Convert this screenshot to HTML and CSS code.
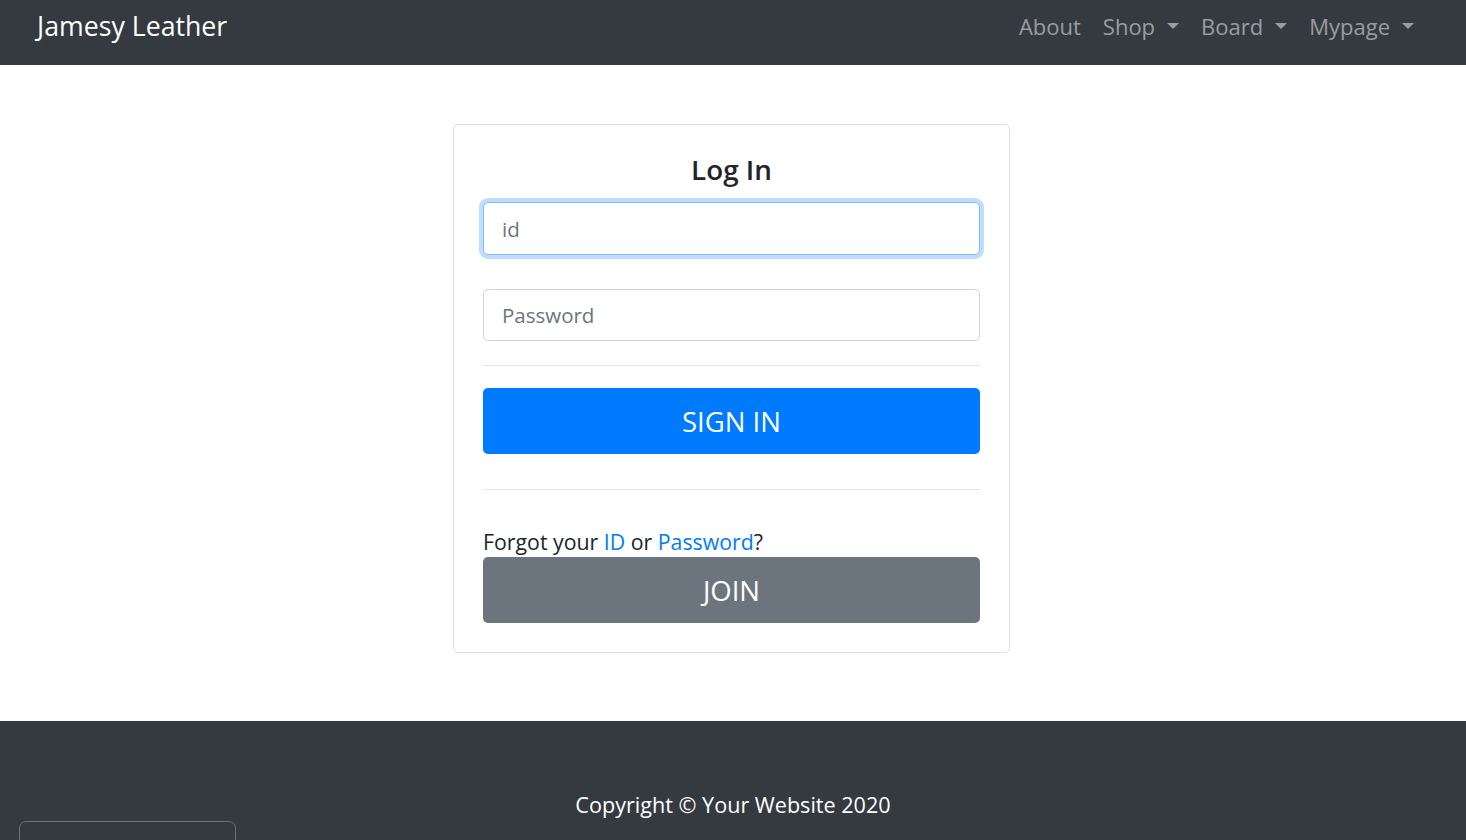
FILE: index.html
```html
<!DOCTYPE html>
<html lang="en">
<head>
<meta charset="utf-8">
<title>Jamesy Leather - Log In</title>
<link rel="stylesheet" href="styles.css">
</head>
<body>
<header class="navbar">
  <a class="brand" href="#">Jamesy Leather</a>
  <nav class="nav">
    <a class="nav-link" href="#">About</a>
    <a class="nav-link dropdown" href="#">Shop</a>
    <a class="nav-link dropdown" href="#">Board</a>
    <a class="nav-link dropdown" href="#">Mypage</a>
  </nav>
</header>
<main class="main">
  <form class="card">
    <h1 class="title">Log In</h1>
    <input class="field focused" type="text" placeholder="id">
    <input class="field second" type="password" placeholder="Password">
    <hr class="rule first-rule">
    <button class="btn btn-primary" type="button">SIGN IN</button>
    <hr class="rule second-rule">
    <p class="forgot">Forgot your <a href="#">ID</a> or <a href="#">Password</a>?</p>
    <button class="btn btn-secondary" type="button">JOIN</button>
  </form>
</main>
<footer class="footer">
  <p class="copyright">Copyright © Your Website 2020</p>
  <div class="widget"></div>
</footer>
</body>
</html>
```
FILE: styles.css
```css
* { box-sizing: border-box; }
html, body { margin: 0; padding: 0; }
body {
  font-family: "Open Sans", "Noto Sans", sans-serif;
  color: #212529;
  background: #fff;
  overflow: hidden;
  height: 840px;
}
a { text-decoration: none; }

.navbar {
  height: 65px;
  background: #343a40;
  display: flex;
  align-items: center;
  justify-content: space-between;
  padding: 0 52px 0 37px;
}
.brand {
  color: #fff;
  font-size: 26.7px;
  line-height: 1;
  margin-top: -12px;
}
.nav {
  display: flex;
  gap: 22px;
  margin-top: -14px;
}
.nav-link {
  color: rgba(255,255,255,0.5);
  font-size: 22px;
  line-height: 1;
  display: flex;
  align-items: center;
}
.dropdown::after {
  content: "";
  display: inline-block;
  margin-left: 12px;
  border-top: 6.5px solid;
  border-left: 6.5px solid transparent;
  border-right: 6.5px solid transparent;
}

.main {
  display: flex;
  justify-content: center;
  padding: 59px 3px 68px 0;
}
.card {
  width: 557px;
  height: 529px;
  border: 1px solid rgba(0,0,0,0.125);
  border-radius: 5px;
  padding: 27px 29px 0 29px;
  display: flex;
  flex-direction: column;
}
.title {
  margin: 0;
  text-align: center;
  font-size: 27.8px;
  font-weight: 600;
  line-height: 34px;
  margin-bottom: 16px;
}
.field {
  display: block;
  width: 100%;
  height: 53px;
  border: 1px solid #ced4da;
  border-radius: 5px;
  padding: 0 18px;
  font-family: inherit;
  font-size: 20.5px;
  color: #495057;
  outline: none;
}
.field::placeholder { color: #6c757d; }
.focused {
  border-color: #80bdff;
  box-shadow: 0 0 0 4px rgba(0,123,255,0.25);
}
.second {
  margin-top: 34px;
  height: 52px;
}
.rule {
  border: 0;
  border-top: 1px solid rgba(0,0,0,0.1);
  margin: 0;
  width: 100%;
}
.first-rule { margin-top: 24px; }
.btn {
  display: block;
  width: 100%;
  height: 66px;
  border: 0;
  border-radius: 5px;
  color: #fff;
  font-family: inherit;
  font-size: 27.5px;
  cursor: pointer;
}
.btn-primary { background: #007bff; margin-top: 22px; }
.second-rule { margin-top: 35px; }
.forgot {
  margin: 36px 0 0;
  font-size: 21.3px;
  line-height: 31px;
}
.forgot a { color: #007bff; }
.btn-secondary { background: #6c757d; margin-top: 0; }

.footer {
  position: relative;
  background: #343a40;
  height: 200px;
  padding-top: 67px;
}
.copyright {
  margin: 0;
  text-align: center;
  color: #fff;
  font-size: 21.6px;
  line-height: 34px;
}
.widget {
  position: absolute;
  left: 19px;
  top: 100px;
  width: 217px;
  height: 60px;
  border: 1px solid #6b7076;
  border-radius: 7px;
}
```
